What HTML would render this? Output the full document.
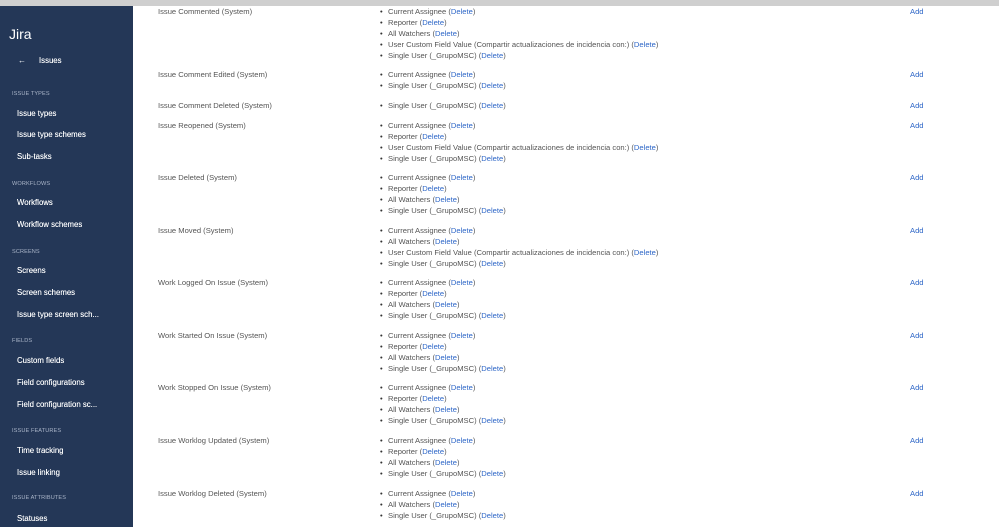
<!DOCTYPE html>
<html><head><meta charset="utf-8"><style>
*{margin:0;padding:0;box-sizing:border-box}
body{width:999px;height:527px;overflow:hidden;background:#fff;font-family:"Liberation Sans",sans-serif;position:relative}
.bar{position:absolute;left:0;top:0;width:999px;height:6px;background:#cfcfcf}
.sb{position:absolute;left:0;top:6px;width:133px;height:521px;background:#243757}
.t{position:absolute;white-space:nowrap;line-height:10px}
.s{color:#fff;font-size:7.8px;left:17px;text-shadow:0 0 0.3px #fff}
.h{color:#a9b4c8;font-size:5.6px;left:12px;letter-spacing:.1px}
.m{color:#555;font-size:7.6px}
.e{left:158px}
.i{left:388px}
.i:before{content:"•";position:absolute;left:-8px;color:#333}
a{color:#2d66c7;text-decoration:none}
.a{left:910px;color:#2d66c7;font-size:7.6px}
</style></head><body>
<div class="bar"></div>
<div class="sb"></div>
<div class="t" style="left:9px;top:26px;color:#fff;font-size:14px;line-height:16px">Jira</div>
<div class="t" style="left:18px;top:56px;color:#fff;font-size:8px">←</div>
<div class="t s" style="left:39px;top:56px">Issues</div>
<div class="t h" style="top:89px">ISSUE TYPES</div>
<div class="t s" style="top:109px">Issue types</div>
<div class="t s" style="top:130px">Issue type schemes</div>
<div class="t s" style="top:152px">Sub-tasks</div>
<div class="t h" style="top:179px">WORKFLOWS</div>
<div class="t s" style="top:198px">Workflows</div>
<div class="t s" style="top:220px">Workflow schemes</div>
<div class="t h" style="top:247px">SCREENS</div>
<div class="t s" style="top:266px">Screens</div>
<div class="t s" style="top:288px">Screen schemes</div>
<div class="t s" style="top:310px">Issue type screen sch...</div>
<div class="t h" style="top:336px">FIELDS</div>
<div class="t s" style="top:356px">Custom fields</div>
<div class="t s" style="top:378px">Field configurations</div>
<div class="t s" style="top:400px">Field configuration sc...</div>
<div class="t h" style="top:426px">ISSUE FEATURES</div>
<div class="t s" style="top:446px">Time tracking</div>
<div class="t s" style="top:468px">Issue linking</div>
<div class="t h" style="top:493px">ISSUE ATTRIBUTES</div>
<div class="t s" style="top:514px">Statuses</div>

<div class="t m e" style="top:7px">Issue Commented (System)</div><div class="t a" style="top:7px">Add</div>
<div class="t m i" style="top:7px">Current Assignee (<a>Delete</a>)</div>
<div class="t m i" style="top:18px">Reporter (<a>Delete</a>)</div>
<div class="t m i" style="top:29px">All Watchers (<a>Delete</a>)</div>
<div class="t m i" style="top:40px">User Custom Field Value (Compartir actualizaciones de incidencia con:) (<a>Delete</a>)</div>
<div class="t m i" style="top:51px">Single User (_GrupoMSC) (<a>Delete</a>)</div>

<div class="t m e" style="top:70px">Issue Comment Edited (System)</div><div class="t a" style="top:70px">Add</div>
<div class="t m i" style="top:70px">Current Assignee (<a>Delete</a>)</div>
<div class="t m i" style="top:81px">Single User (_GrupoMSC) (<a>Delete</a>)</div>

<div class="t m e" style="top:101px">Issue Comment Deleted (System)</div><div class="t a" style="top:101px">Add</div>
<div class="t m i" style="top:101px">Single User (_GrupoMSC) (<a>Delete</a>)</div>

<div class="t m e" style="top:121px">Issue Reopened (System)</div><div class="t a" style="top:121px">Add</div>
<div class="t m i" style="top:121px">Current Assignee (<a>Delete</a>)</div>
<div class="t m i" style="top:132px">Reporter (<a>Delete</a>)</div>
<div class="t m i" style="top:143px">User Custom Field Value (Compartir actualizaciones de incidencia con:) (<a>Delete</a>)</div>
<div class="t m i" style="top:154px">Single User (_GrupoMSC) (<a>Delete</a>)</div>

<div class="t m e" style="top:173px">Issue Deleted (System)</div><div class="t a" style="top:173px">Add</div>
<div class="t m i" style="top:173px">Current Assignee (<a>Delete</a>)</div>
<div class="t m i" style="top:184px">Reporter (<a>Delete</a>)</div>
<div class="t m i" style="top:195px">All Watchers (<a>Delete</a>)</div>
<div class="t m i" style="top:206px">Single User (_GrupoMSC) (<a>Delete</a>)</div>

<div class="t m e" style="top:226px">Issue Moved (System)</div><div class="t a" style="top:226px">Add</div>
<div class="t m i" style="top:226px">Current Assignee (<a>Delete</a>)</div>
<div class="t m i" style="top:237px">All Watchers (<a>Delete</a>)</div>
<div class="t m i" style="top:248px">User Custom Field Value (Compartir actualizaciones de incidencia con:) (<a>Delete</a>)</div>
<div class="t m i" style="top:259px">Single User (_GrupoMSC) (<a>Delete</a>)</div>

<div class="t m e" style="top:278px">Work Logged On Issue (System)</div><div class="t a" style="top:278px">Add</div>
<div class="t m i" style="top:278px">Current Assignee (<a>Delete</a>)</div>
<div class="t m i" style="top:289px">Reporter (<a>Delete</a>)</div>
<div class="t m i" style="top:300px">All Watchers (<a>Delete</a>)</div>
<div class="t m i" style="top:311px">Single User (_GrupoMSC) (<a>Delete</a>)</div>

<div class="t m e" style="top:331px">Work Started On Issue (System)</div><div class="t a" style="top:331px">Add</div>
<div class="t m i" style="top:331px">Current Assignee (<a>Delete</a>)</div>
<div class="t m i" style="top:342px">Reporter (<a>Delete</a>)</div>
<div class="t m i" style="top:353px">All Watchers (<a>Delete</a>)</div>
<div class="t m i" style="top:364px">Single User (_GrupoMSC) (<a>Delete</a>)</div>

<div class="t m e" style="top:383px">Work Stopped On Issue (System)</div><div class="t a" style="top:383px">Add</div>
<div class="t m i" style="top:383px">Current Assignee (<a>Delete</a>)</div>
<div class="t m i" style="top:394px">Reporter (<a>Delete</a>)</div>
<div class="t m i" style="top:405px">All Watchers (<a>Delete</a>)</div>
<div class="t m i" style="top:416px">Single User (_GrupoMSC) (<a>Delete</a>)</div>

<div class="t m e" style="top:436px">Issue Worklog Updated (System)</div><div class="t a" style="top:436px">Add</div>
<div class="t m i" style="top:436px">Current Assignee (<a>Delete</a>)</div>
<div class="t m i" style="top:447px">Reporter (<a>Delete</a>)</div>
<div class="t m i" style="top:458px">All Watchers (<a>Delete</a>)</div>
<div class="t m i" style="top:469px">Single User (_GrupoMSC) (<a>Delete</a>)</div>

<div class="t m e" style="top:489px">Issue Worklog Deleted (System)</div><div class="t a" style="top:489px">Add</div>
<div class="t m i" style="top:489px">Current Assignee (<a>Delete</a>)</div>
<div class="t m i" style="top:500px">All Watchers (<a>Delete</a>)</div>
<div class="t m i" style="top:511px">Single User (_GrupoMSC) (<a>Delete</a>)</div>
</body></html>
